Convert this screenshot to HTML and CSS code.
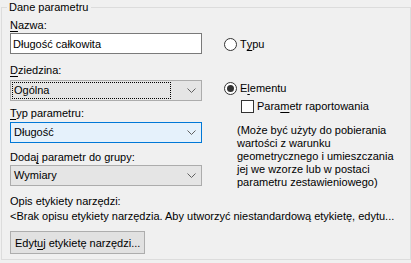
FILE: index.html
```html
<!DOCTYPE html>
<html lang="pl">
<head>
  <meta charset="UTF-8" />
  <title>Właściwości parametru</title>
  <link rel="stylesheet" href="styles.css">
</head>
<body>
  <fieldset class="group">
    <legend>Dane parametru</legend>
    <div class="columns">
      <div class="col-left">
        <div class="lbl lbl-name"><u>N</u>azwa:</div>
        <input class="textbox" type="text" value="Długość całkowita" />
        <div class="lbl lbl-discipline"><u>D</u>ziedzina:</div>
        <div class="combo combo-discipline">
          <span class="combo-value dotted">Ogólna</span>
          <svg class="chevron" width="9" height="5" viewBox="0 0 9 5"><polyline points="0.5,0.5 4.5,4.5 8.5,0.5" /></svg>
        </div>
        <div class="lbl lbl-type"><u>T</u>yp parametru:</div>
        <div class="combo combo-type focused">
          <span class="combo-value">Długość</span>
          <svg class="chevron" width="9" height="5" viewBox="0 0 9 5"><polyline points="0.5,0.5 4.5,4.5 8.5,0.5" /></svg>
        </div>
        <div class="lbl lbl-group">Doda<u>j</u> parametr do grupy:</div>
        <div class="combo combo-group">
          <span class="combo-value">Wymiary</span>
          <svg class="chevron" width="9" height="5" viewBox="0 0 9 5"><polyline points="0.5,0.5 4.5,4.5 8.5,0.5" /></svg>
        </div>
      </div>
      <div class="col-right">
        <div class="opt opt-type"><span class="radio"></span>T<u>y</u>pu</div>
        <div class="opt opt-inst"><span class="radio checked"></span>E<u>l</u>ementu</div>
        <div class="opt opt-report"><span class="checkbox"></span>Para<u>m</u>etr raportowania</div>
        <p class="note">(Może być użyty do pobierania<br>wartości z warunku<br>geometrycznego i umieszczania<br>jej we wzorze lub w postaci<br>parametru zestawieniowego)</p>
      </div>
    </div>
    <div class="lbl lbl-tip">Opis etykiety narzędzi:</div>
    <div class="tip-text">&lt;Brak opisu etykiety narzędzia. Aby utworzyć niestandardową etykietę, edytu...</div>
    <button class="btn">Edyt<u>u</u>j etykietę narzędzi...</button>
  </fieldset>
</body>
</html>
```

FILE: styles.css
```css
:root {
  --bg: #f0f0f0;
  --text: #000;
  --frame: #dcdcdc;
  --combo-bg: #e5e5e5;
  --combo-border: #acacac;
  --focus-bg: #e5f1fb;
  --focus-border: #0078d7;
}
html, body {
  margin: 0;
  padding: 0;
  background: var(--bg);
}
body {
  font-family: "Liberation Sans", Arial, sans-serif;
  font-size: 11px;
  color: var(--text);
  width: 411px;
  height: 263px;
  overflow: hidden;
}
u { text-decoration-thickness: 1px; text-underline-offset: 2px; }

.group {
  margin: 0 0 0 1px;
  padding: 0 8px 5px 8px;
  border: 1px solid var(--frame);
  min-width: 0;
}
.group legend {
  margin-left: -3px;
  padding: 0 2px;
  line-height: 14px;
}

.columns { display: flex; }
.col-left { width: 192px; flex: none; }
.col-right { margin-left: 22px; flex: 1; }

.lbl { line-height: 14px; white-space: nowrap; }
.lbl-name { margin-top: 4px; }
.lbl-discipline { margin-top: 9px; }
.lbl-type { margin-top: 5px; }
.lbl-group { margin-top: 7px; }
.lbl-tip { margin-top: 5px; }

.textbox {
  display: block;
  box-sizing: border-box;
  width: 192px;
  height: 21px;
  margin: 1px 0 0 0;
  padding: 0 2px;
  border: 1px solid #7a7a7a;
  background: #fff;
  font: inherit;
  color: var(--text);
  outline: none;
}

.combo {
  box-sizing: border-box;
  display: flex;
  align-items: center;
  height: 21px;
  padding: 0 5px 0 2px;
  border: 1px solid var(--combo-border);
  background: var(--combo-bg);
}
.combo.focused {
  background: var(--focus-bg);
  border-color: var(--focus-border);
}
.combo-discipline { margin-top: 3px; }
.combo-type { margin-top: 2px; }
.combo-group { margin-top: 1px; }
.combo-value {
  flex: 1;
  line-height: 15px;
  padding-left: 1px;
}
.combo-value.dotted {
  outline: 1px dotted #000;
  margin-right: 14px;
}
.chevron {
  flex: none;
  fill: none;
  stroke: #606060;
  stroke-width: 1;
  margin-left: 3px;
}

.opt {
  display: flex;
  align-items: center;
  line-height: 14px;
  white-space: nowrap;
}
.opt-type { margin-top: 23px; }
.opt-inst { margin-top: 30px; }
.opt-report { margin-top: 4px; margin-left: 17px; }

.radio, .checkbox {
  box-sizing: border-box;
  flex: none;
  width: 13px;
  height: 13px;
  border: 1px solid #333;
  background: #fff;
  margin-right: 3px;
}
.radio {
  border-radius: 50%;
  display: flex;
  align-items: center;
  justify-content: center;
}
.radio.checked::after {
  content: "";
  width: 7px;
  height: 7px;
  border-radius: 50%;
  background: #333;
}

.note {
  margin: 11px 0 0 13px;
  line-height: 13px;
  white-space: nowrap;
}

.tip-text {
  margin-top: 1px;
  line-height: 14px;
  white-space: nowrap;
  overflow: hidden;
}

.btn {
  display: block;
  box-sizing: border-box;
  margin-top: 8px;
  height: 23px;
  padding: 0 4px;
  border: 1px solid #adadad;
  background: #e1e1e1;
  font: inherit;
  color: var(--text);
}
```
